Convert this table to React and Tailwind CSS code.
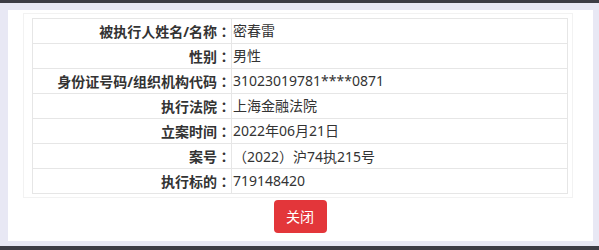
import React from "react";

const rows = [
  ["被执行人姓名/名称", "密春雷"],
  ["性别", "男性"],
  ["身份证号码/组织机构代码", "31023019781****0871"],
  ["执行法院", "上海金融法院"],
  ["立案时间", "2022年06月21日"],
  ["案号", "（2022）沪74执215号"],
  ["执行标的", "719148420"],
];

// fullwidth punctuation centred in its box, the way the original font draws it
function Punct({ text }) {
  return text.split(/([（）：])/).map((part, i) =>
    /^[（）：]$/.test(part) ? (
      <span key={i} className="font-['Noto_Sans_CJK_TC',sans-serif]">
        {part}
      </span>
    ) : (
      part
    )
  );
}

export default function App() {
  return (
    <div className="w-[599px] h-[250px] bg-[#e8e8f4] flex flex-col overflow-hidden text-[#333] font-['Noto_Sans','Noto_Sans_CJK_SC',sans-serif]">
      <div className="h-[3px] bg-[#3d3d45] shrink-0" />
      <div className="flex-1 pl-[8px] pr-[6px] pt-[7px] pb-[5px] flex">
        <div className="flex-1 bg-white flex flex-col items-start">
          <div className="ml-[15px] mt-[3px] w-[550px] border border-[#f2f2f2] pl-[8px] pt-[4px] pb-[3px]">
            <table className="w-[536px] border-collapse text-[14px] leading-[20px]">
              <tbody>
                {rows.map(([label, value]) => (
                  <tr key={label} className="h-[25px]">
                    <td className="w-[199px] border border-[#e6e6e6] text-right font-bold pr-0 align-middle">
                      <Punct text={label + "："} />
                    </td>
                    <td className="border border-[#e6e6e6] pl-[1px] align-middle">
                      <Punct text={value} />
                    </td>
                  </tr>
                ))}
              </tbody>
            </table>
          </div>
          <div className="w-[565px] flex justify-center mt-[2px]">
            <button className="ml-[19px] w-[53px] h-[33px] rounded-[4px] bg-[#e3363a] text-white text-[14px]">
              关闭
            </button>
          </div>
        </div>
      </div>
      <div className="h-[4px] bg-[#3d3d45] shrink-0" />
    </div>
  );
}
